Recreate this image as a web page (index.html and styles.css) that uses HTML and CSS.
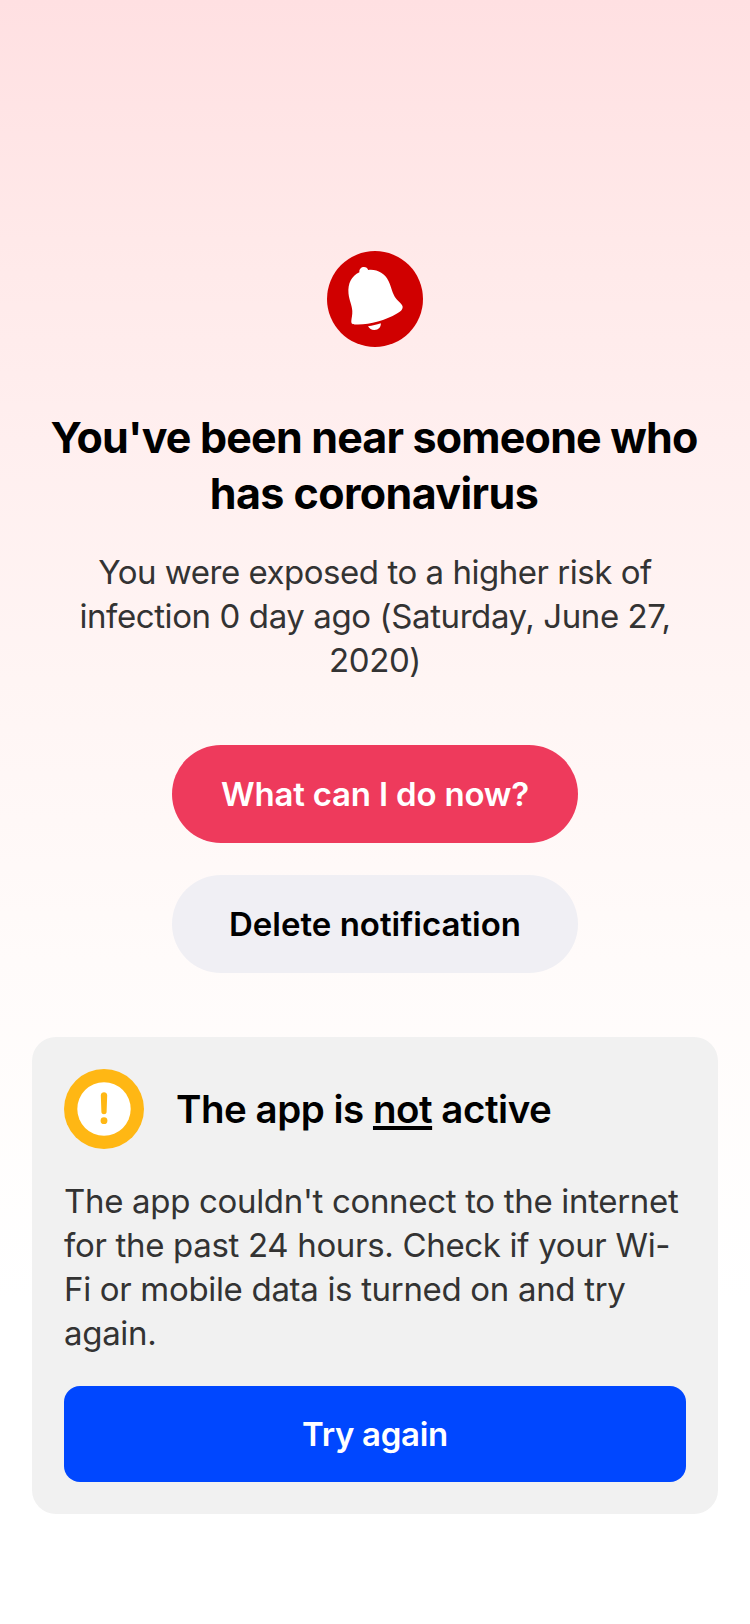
FILE: index.html
```html
<!DOCTYPE html>
<html lang="en">
<head>
<meta charset="utf-8">
<title>Exposure notification</title>
<link rel="stylesheet" href="styles.css">
</head>
<body>
<main class="screen">
  <svg class="bell" viewBox="0 0 96 96" aria-hidden="true">
    <circle cx="48" cy="48" r="48" fill="#d00000"/>
    <path fill="#fff" d="M32.4 21.300C32 18 34.300 16 37 16C39.200 16 40.500 17.200 41.200 19C50 18 57.500 22 61.500 30C64.500 36 65 42 69 47.500C71 50.500 75 52.500 75.600 55.500C76 58.500 73.500 60.500 70 62.500C58 69.500 42 74 29 73.500C25.500 73.400 24.200 73 24.300 70C24.500 67 25.500 64 25.300 60C25 54 22.300 50 21.500 42.500C20.600 32.500 24.500 25 32.400 21.300Z"/>
    <path fill="#fff" d="M41 75.200C45.500 74.700 49.500 73.800 53.800 72.300C54.200 75.800 51.500 79 47.500 79.100C44.500 79.200 42.500 77.500 41 75.200Z"/>
  </svg>
  <h1 class="title"><span class="line">You've been near someone who</span> <span class="line wide">has coronavirus</span></h1>
  <p class="text lead"><span class="line snug">You were exposed to a higher risk of</span> <span class="line">infection 0 day ago (Saturday, June 27,</span> <span class="line">2020)</span></p>
  <div class="actions">
    <button class="pill primary">What can I do now?</button>
    <button class="pill secondary">Delete notification</button>
  </div>
  <section class="card">
    <header class="card-head">
      <svg class="alert" viewBox="0 0 80 80" aria-hidden="true">
        <circle cx="40" cy="40" r="40" fill="#ffb714"/>
        <circle cx="40" cy="40" r="26.700" fill="#fff"/>
        <path fill="#ffb714" d="M36.800 26.300C36.800 22.100 43.200 22.100 43.200 26.300L42.600 43C42.500 45.900 37.500 45.900 37.400 43Z"/>
        <circle cx="40" cy="51.700" r="3.400" fill="#ffb714"/>
      </svg>
      <h2 class="card-title">The app is <u>not</u> active</h2>
    </header>
    <p class="text"><span class="line">The app couldn't connect to the internet</span> <span class="line">for the past 24 hours. Check if your Wi-</span><span class="line">Fi or mobile data is turned on and try</span> <span class="line">again.</span></p>
    <button class="retry">Try again</button>
  </section>
</main>
</body>
</html>
```
FILE: styles.css
```css
* { box-sizing: border-box; }
body { margin: 0; font-family: Inter, "Liberation Sans", sans-serif; color: #000; }
.screen {
  min-height: 1624px;
  padding: 251px 32px 0;
  display: flex;
  flex-direction: column;
  align-items: center;
  background: linear-gradient(#ffe0e2 0, #ffe9e9 240px, #ffefef 440px, #fff5f4 680px, #fffbfa 960px, #fff 1300px);
}
.line { display: block; white-space: nowrap; }
.bell { width: 96px; height: 96px; display: block; }
.title { margin: 62px 0 0; padding-right: 2px; font-size: 43px; line-height: 56px; font-weight: 700; text-align: center; letter-spacing: -0.82px; }
.title .wide { letter-spacing: -0.6px; }
.text { margin: 0; font-size: 33px; line-height: 44px; color: #333; letter-spacing: -0.32px; }
.lead { margin-top: 29px; text-align: center; letter-spacing: -0.4px; }
.lead .snug { letter-spacing: -0.47px; }
.actions { margin-top: 63px; display: flex; flex-direction: column; gap: 32px; }
button { border: 0; padding: 0; font: 600 33px/44px Inter, "Liberation Sans", sans-serif; letter-spacing: -0.2px; }
.pill { width: 406px; height: 98px; border-radius: 49px; }
.primary { background: #ee3a5c; color: #fff; }
.secondary { background: #f0eff4; color: #000; letter-spacing: 0; }
.card { margin-top: 64px; width: 686px; height: 477px; padding: 32px; border-radius: 24px; background: #f1f1f1; }
.card-head { display: flex; align-items: center; gap: 32px; }
.alert { width: 80px; height: 80px; display: block; }
.card-title { margin: 0; font-size: 38.5px; line-height: 48px; font-weight: 600; letter-spacing: -0.48px; white-space: nowrap; }
.card-title u { text-decoration-thickness: 4px; text-underline-offset: 3px; text-decoration-skip-ink: none; }
.card .text { margin-top: 30px; }
.retry { display: block; width: 622px; height: 96px; margin-top: 31px; border-radius: 16px; background: #0047ff; color: #fff; letter-spacing: -0.3px; }
```
